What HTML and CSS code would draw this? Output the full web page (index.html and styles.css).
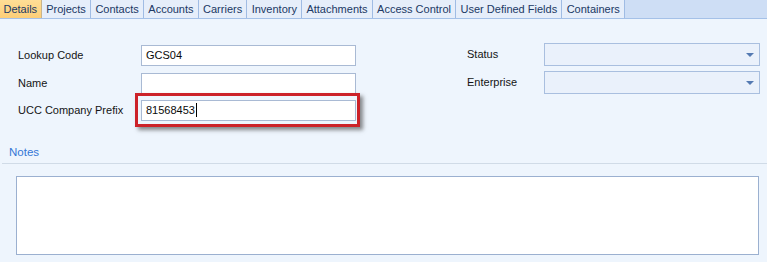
FILE: index.html
```html
<!DOCTYPE html>
<html lang="en">
<head>
    <meta charset="UTF-8">
    <title>Company Details</title>
    <link rel="stylesheet" href="styles.css">
</head>
<body>
    <div class="tabs">
        <div class="tab active">Details</div>
        <div class="tab">Projects</div>
        <div class="tab">Contacts</div>
        <div class="tab">Accounts</div>
        <div class="tab">Carriers</div>
        <div class="tab">Inventory</div>
        <div class="tab">Attachments</div>
        <div class="tab">Access Control</div>
        <div class="tab">User Defined Fields</div>
        <div class="tab">Containers</div>
    </div>
    <div class="content">
        <div class="form">
            <div class="col col-left">
                <div class="row">
                    <label class="label">Lookup Code</label>
                    <div class="input">GCS04</div>
                </div>
                <div class="row">
                    <label class="label">Name</label>
                    <div class="input"></div>
                </div>
                <div class="row row-last">
                    <label class="label">UCC Company Prefix</label>
                    <div class="input">81568453<span class="caret"></span></div>
                    <div class="highlight"></div>
                </div>
            </div>
            <div class="col col-right">
                <div class="row">
                    <label class="label label-right">Status</label>
                    <div class="select"><span class="arrow"></span></div>
                </div>
                <div class="row">
                    <label class="label label-right">Enterprise</label>
                    <div class="select"><span class="arrow"></span></div>
                </div>
            </div>
        </div>
        <div class="notes-header">Notes</div>
        <div class="notes-box"></div>
    </div>
</body>
</html>
```

FILE: styles.css
```css
body {
    margin: 0;
    padding: 0;
    width: 767px;
    height: 262px;
    overflow: hidden;
    background-color: rgb(238, 245, 253);
    font-family: "Liberation Sans", Arial, sans-serif;
    font-size: 11px;
    color: rgb(30, 30, 30);
}
.tabs {
    display: flex;
    height: 18px;
    background-color: rgb(206, 222, 245);
    border-bottom: 1px solid rgb(165, 193, 232);
}
.tab {
    display: flex;
    align-items: center;
    padding: 0 4px 0 4.5px;
    background-color: rgb(230, 238, 250);
    border-right: 1px solid rgb(160, 188, 228);
    color: rgb(32, 56, 100);
    font-size: 11px;
    white-space: nowrap;
}
.tab.active {
    padding: 0 3.5px 0 3.5px;
    background: linear-gradient(rgb(255, 222, 150), rgb(252, 206, 120));
    border-right-color: rgb(200, 180, 140);
}
.content {
    padding-top: 24px;
}
.form {
    display: flex;
    height: 96px;
}
.col {
    display: flex;
    flex-direction: column;
    gap: 6px;
}
.col-left {
    padding-left: 18px;
    padding-top: 1px;
}
.col-right {
    margin-left: 111px;
}
.row {
    position: relative;
    display: flex;
    align-items: center;
    height: 22px;
}
.row-last {
    margin-top: -1px;
}
.label {
    width: 123px;
    color: rgb(20, 20, 20);
}
.label-right {
    width: 77px;
}
.input {
    box-sizing: border-box;
    width: 215px;
    height: 21px;
    display: flex;
    align-items: center;
    padding-left: 4px;
    background-color: white;
    border: 1px solid rgb(169, 186, 212);
    color: rgb(10, 10, 10);
}
.caret {
    display: inline-block;
    width: 1px;
    height: 14px;
    background-color: black;
    margin-left: 1px;
}
.highlight {
    position: absolute;
    left: 117px;
    top: -6px;
    width: 219px;
    height: 28px;
    border: 3px solid rgb(204, 34, 41);
    box-shadow: 3px 3px 4px rgba(60, 60, 60, 0.6);
    pointer-events: none;
}
.select {
    box-sizing: border-box;
    width: 216px;
    height: 23px;
    position: relative;
    background-color: rgb(234, 241, 251);
    border: 1px solid rgb(169, 191, 223);
}
.arrow {
    position: absolute;
    right: 5px;
    top: 9px;
    width: 0;
    height: 0;
    border-left: 4px solid transparent;
    border-right: 4px solid transparent;
    border-top: 4px solid rgb(84, 122, 178);
}
.notes-header {
    margin: 6px 0 0 2px;
    padding: 0 0 4px 7px;
    height: 14px;
    line-height: 14px;
    color: rgb(51, 118, 214);
    font-size: 11.5px;
    border-bottom: 1px solid rgb(208, 219, 231);
}
.notes-box {
    box-sizing: border-box;
    margin: 12px 0 0 16px;
    width: 743px;
    height: 79px;
    background-color: white;
    border: 1px solid rgb(155, 176, 208);
}
```
